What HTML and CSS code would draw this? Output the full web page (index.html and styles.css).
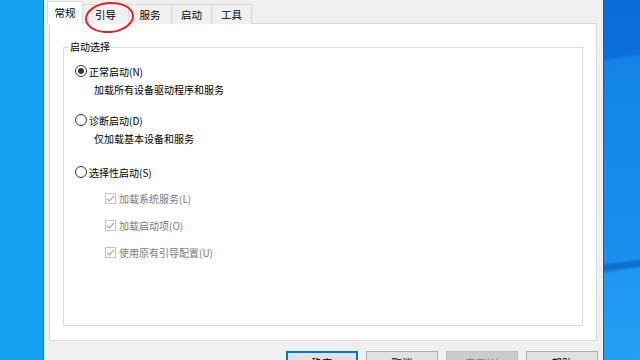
FILE: index.html
```html
<!DOCTYPE html>
<html lang="zh-CN">
  <head>
    <meta charset="UTF-8" />
    <meta name="viewport" content="width=device-width, initial-scale=1.0" />
    <title>系统配置</title>
    <link rel="stylesheet" href="styles.css">
  </head>
  <body>
    <div class="desk-left"></div>
    <div class="dialog">
      <div class="tabs">
        <div class="tab active">常规</div>
        <div class="tab">引导</div>
        <div class="tab">服务</div>
        <div class="tab">启动</div>
        <div class="tab">工具</div>
        <div class="mark"></div>
      </div>
      <div class="panel">
        <fieldset class="group">
          <legend>启动选择</legend>
          <div class="opt first"><span class="radio checked"></span>正常启动(N)</div>
          <div class="desc">加载所有设备驱动程序和服务</div>
          <div class="opt"><span class="radio"></span>诊断启动(D)</div>
          <div class="desc">仅加载基本设备和服务</div>
          <div class="opt opt-sel"><span class="radio"></span>选择性启动(S)</div>
          <div class="check first-check">
            <svg class="box" width="11" height="11" viewBox="0 0 11 11"><rect x="0.5" y="0.5" width="10" height="10" fill="#fff" stroke="#c4c4c4"/><path d="M2 5.6 L4.3 7.9 L9 3" fill="none" stroke="#a8a8a8" stroke-width="1.1"/></svg>
            加载系统服务(L)
          </div>
          <div class="check">
            <svg class="box" width="11" height="11" viewBox="0 0 11 11"><rect x="0.5" y="0.5" width="10" height="10" fill="#fff" stroke="#c4c4c4"/><path d="M2 5.6 L4.3 7.9 L9 3" fill="none" stroke="#a8a8a8" stroke-width="1.1"/></svg>
            加载启动项(O)
          </div>
          <div class="check">
            <svg class="box" width="11" height="11" viewBox="0 0 11 11"><rect x="0.5" y="0.5" width="10" height="10" fill="#fff" stroke="#c4c4c4"/><path d="M2 5.6 L4.3 7.9 L9 3" fill="none" stroke="#a8a8a8" stroke-width="1.1"/></svg>
            使用原有引导配置(U)
          </div>
        </fieldset>
      </div>
      <div class="buttons">
        <button class="btn default">确定</button>
        <button class="btn">取消</button>
        <button class="btn" disabled>应用(A)</button>
        <button class="btn">帮助</button>
      </div>
    </div>
    <div class="desk-right"></div>
  </body>
</html>
```

FILE: styles.css
```css
body {
  margin: 0;
  width: 640px;
  height: 360px;
  overflow: hidden;
  display: flex;
  font-family: "Noto Sans CJK SC", "Noto Sans", sans-serif;
  font-size: 10px;
  color: #000;
}
.desk-left {
  width: 43px;
  flex: none;
  background: #14a2f0;
  border-right: 1px solid #0b74c4;
}
.desk-right {
  flex: 1;
  border-left: 1px solid #3d5670;
  background: linear-gradient(172deg, #0a6cd6 0%, #0b70da 16%, #1383e8 17%, #1a8ff0 72%, #0e6fcf 73%, #0e6fcf 74%, #1e97f2 75%, #22a0f5 100%);
}
.dialog {
  width: 559px;
  flex: none;
  background: #f0f0f0;
  padding: 2px 6px 0 5px;
  box-sizing: border-box;
  display: flex;
  flex-direction: column;
}
.tabs {
  display: flex;
  align-items: flex-end;
  height: 22px;
  position: relative;
  margin-bottom: -1px;
  z-index: 1;
}
.tab {
  height: 20px;
  line-height: 20px;
  width: 41px;
  text-align: center;
  background: #f0f0f0;
  border: 1px solid #d9d9d9;
  border-bottom: none;
  margin-left: -1px;
  box-sizing: border-box;
  color: #000;
  font-size: 10.5px;
}
.tab.active {
  width: 36px;
  height: 23px;
  line-height: 22px;
  margin-left: -2px;
  background: #fff;
  z-index: 2;
}
.tab:nth-child(2) {
  width: 47px;
}
.tab:nth-child(3) {
  width: 44px;
}
.mark {
  position: absolute;
  left: 36px;
  top: 0;
  width: 45px;
  height: 27px;
  border: 2px solid #e0262b;
  border-radius: 50%;
  transform: rotate(-5deg);
  z-index: 3;
}
.panel {
  height: 318px;
  flex: none;
  background: #fff;
  border: 1px solid #d9d9d9;
  box-sizing: border-box;
  padding: 15px 13px 14px 13px;
  display: flex;
  flex-direction: column;
}
.group {
  flex: 1;
  margin: 0;
  padding: 7px 11px 0;
  border: 1px solid #dcdcdc;
  min-width: 0;
}
.group legend {
  margin-left: -6px;
  padding: 0 1px;
  line-height: 16px;
}
.opt {
  display: flex;
  align-items: center;
  height: 18px;
  margin-top: 12px;
}
.opt.first {
  margin-top: 0;
}
.opt.opt-sel {
  margin-top: 15px;
}
.radio {
  width: 12px;
  height: 12px;
  border: 1px solid #333;
  border-radius: 50%;
  margin-right: 2px;
  box-sizing: border-box;
  display: flex;
  align-items: center;
  justify-content: center;
}
.radio.checked::after {
  content: "";
  width: 6px;
  height: 6px;
  border-radius: 50%;
  background: #333;
}
.desc {
  height: 18px;
  line-height: 18px;
  margin-top: 1px;
  padding-left: 19px;
}
.check {
  display: flex;
  align-items: center;
  height: 18px;
  margin-top: 9px;
  padding-left: 30px;
  color: #7a7a7a;
}
.check.first-check {
  margin-top: 8px;
}
.box {
  margin-right: 3px;
  flex: none;
}
.buttons {
  display: flex;
  justify-content: flex-end;
  gap: 8px;
  padding-top: 10px;
  margin-right: -1px;
}
.btn {
  width: 72px;
  height: 23px;
  flex: none;
  font-family: inherit;
  font-size: 10.5px;
  background: #e1e1e1;
  border: 1px solid #adadad;
  color: #000;
  padding: 0;
}
.btn.default {
  border: 2px solid #0078d7;
}
.btn:disabled {
  background: #cccccc;
  border-color: #bfbfbf;
  color: #838383;
}
```
